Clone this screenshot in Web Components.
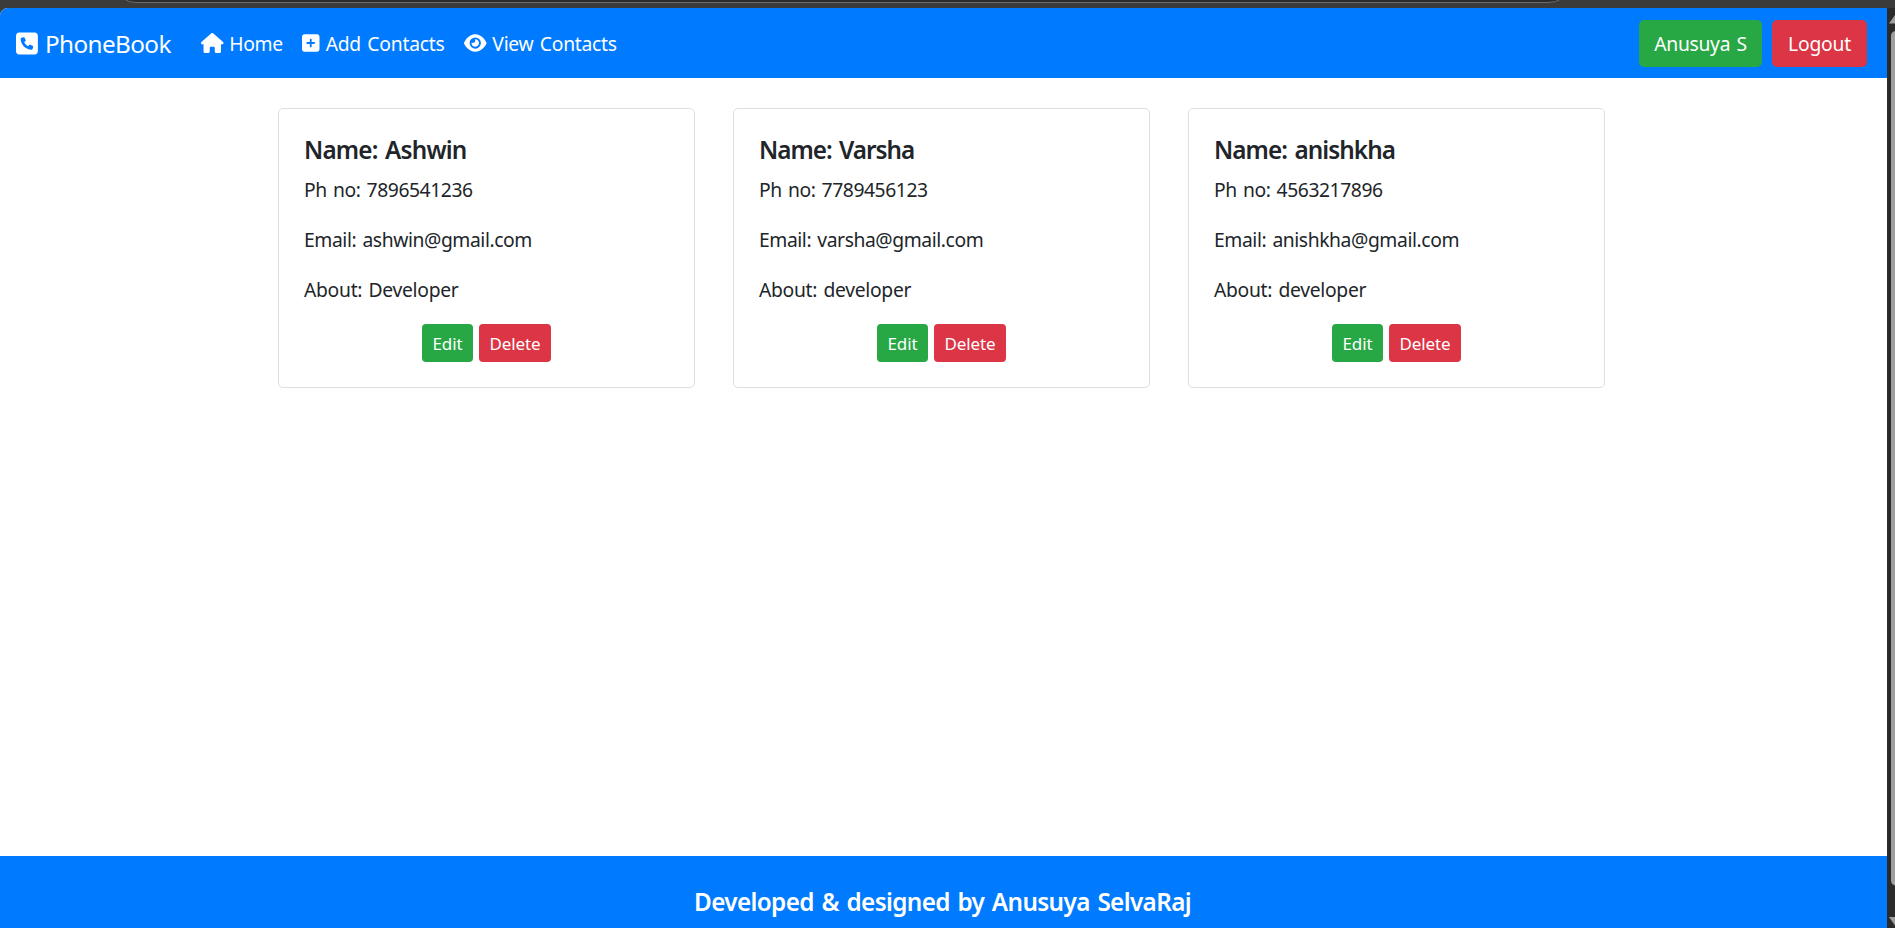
<!DOCTYPE html>
<html lang="en">
<head>
<meta charset="utf-8">
<title>PhoneBook</title>
<style>
html, body { margin: 0; height: 100%; overflow: hidden; }
body { font-family: "Noto Sans", "Open Sans", sans-serif; font-size: 19.3px; line-height: 30px; color: #212529; background: #3b3b3b; }
</style>
</head>
<body>
<app-window></app-window>
<script>
const shadow = (el, html) => { el.attachShadow({ mode: 'open' }).innerHTML = html; return el.shadowRoot; };

// Text run whose tracking is adjusted so that it takes up the given advance width.
class FitText extends HTMLElement {
  connectedCallback() {
    if (this.shadowRoot) return;
    const w = +this.getAttribute('w');
    const root = shadow(this, `<style>:host{display:block;white-space:pre;width:${w}px;padding-top:1px;margin-bottom:-1px}span{display:inline-block;word-spacing:.08em}</style><span></span>`);
    const span = root.querySelector('span');
    span.textContent = this.getAttribute('text');
    const natural = span.getBoundingClientRect().width;
    span.style.letterSpacing = ((w - natural) / span.textContent.length).toFixed(3) + 'px';
  }
}
customElements.define('fit-text', FitText);

const BOX = 'M64 32C28.7 32 0 60.7 0 96V416c0 35.3 28.7 64 64 64H384c35.3 0 64-28.7 64-64V96c0-35.3-28.7-64-64-64H64z';
const ICONS = {
  phone: [448, BOX + 'm90.7 96.7c9.7-2.6 19.9 2.3 23.7 11.6l20 48c3.4 8.2 1 17.6-5.8 23.2L168 231.7c16.6 35.2 45.1 63.7 80.3 80.3l20.2-24.7c5.6-6.8 15-9.2 23.2-5.8l48 20c9.3 3.9 14.2 14 11.6 23.7l-12 44C336.9 378 329 384 320 384C196.3 384 96 283.7 96 160c0-9 6-16.9 14.7-19.3l44-12z'],
  home: [576, 'M575.8 255.5c0 18-15 32.1-32 32.1h-32l.7 160.2c0 2.7-.2 5.4-.5 8.1V472c0 22.1-17.9 40-40 40H456c-1.1 0-2.2 0-3.3-.1c-1.4 .1-2.8 .1-4.2 .1H416 392c-22.1 0-40-17.9-40-40V448 384c0-17.7-14.3-32-32-32H256c-17.7 0-32 14.3-32 32v64 24c0 22.1-17.9 40-40 40H160 128.1c-1.5 0-3-.1-4.5-.2c-1.2 .1-2.4 .2-3.6 .2H104c-22.1 0-40-17.9-40-40V360c0-.9 0-1.9 .1-2.8V287.6H32c-18 0-32-14-32-32.1c0-9 3-17 10-24L266.4 8c7-7 15-8 22-8s15 2 21 7L564.8 231.5c8 7 12 15 11 24z'],
  plus: [448, BOX + 'M200 344V280H136c-13.3 0-24-10.7-24-24s10.7-24 24-24h64V168c0-13.3 10.7-24 24-24s24 10.7 24 24v64h64c13.3 0 24 10.7 24 24s-10.7 24-24 24H248v64c0 13.3-10.7 24-24 24s-24-10.7-24-24z'],
  eye: [576, 'M288 32c-80.8 0-145.5 36.8-192.6 80.6C48.6 156 17.3 208 2.5 243.7c-3.3 7.9-3.3 16.7 0 24.6C17.3 304 48.6 356 95.4 399.4C142.5 443.2 207.2 480 288 480s145.5-36.8 192.6-80.6c46.8-43.5 78.1-95.4 93-131.1c3.3-7.9 3.3-16.7 0-24.6c-14.9-35.7-46.2-87.7-93-131.1C433.5 68.8 368.8 32 288 32zM144 256a144 144 0 1 1 288 0 144 144 0 1 1 -288 0zm144-64c0 35.3-28.7 64-64 64c-7.1 0-13.9-1.2-20.3-3.3c-5.5-1.8-11.9 1.6-11.7 7.4c.3 6.9 1.3 13.8 3.2 20.7c13.7 51.2 66.4 81.6 117.6 67.9s81.6-66.4 67.9-117.6c-11.1-41.5-47.8-69.4-88.6-71.1c-5.8-.2-9.2 6.1-7.4 11.7c2.1 6.4 3.3 13.2 3.3 20.3z']
};
class UiIcon extends HTMLElement {
  connectedCallback() {
    if (this.shadowRoot) return;
    const [w, d] = ICONS[this.getAttribute('name')], h = +this.getAttribute('size');
    shadow(this, `<style>:host{display:block;flex:none}svg{display:block}</style><svg width="${w / 512 * h}" height="${h}" viewBox="0 0 ${w} 512" fill="currentColor" fill-rule="evenodd"><path d="${d}"/></svg>`);
  }
}
customElements.define('ui-icon', UiIcon);

class NavItem extends HTMLElement {
  connectedCallback() {
    if (this.shadowRoot) return;
    const brand = this.hasAttribute('brand');
    shadow(this, `<style>:host{display:flex;align-items:center;gap:${brand ? 7 : 5.7}px;font-size:${brand ? 24.3 : 19.3}px;font-weight:380;height:38px}</style>
      <ui-icon name="${this.getAttribute('icon')}" size="${brand ? 25 : 20}"></ui-icon><fit-text text="${this.getAttribute('label')}" w="${this.getAttribute('w')}"></fit-text>`);
  }
}
customElements.define('nav-item', NavItem);

class UiButton extends HTMLElement {
  connectedCallback() {
    if (this.shadowRoot) return;
    shadow(this, `<style>
      :host{display:flex;box-sizing:border-box;align-items:center;justify-content:center;height:47px;border-radius:5px;color:#fff;background:#28a745;font-weight:380}
      :host([danger]){background:#dc3545}
      :host([small]){height:38px;border-radius:4px;font-size:17px;line-height:26px}
      </style><fit-text text="${this.getAttribute('label')}" w="${this.getAttribute('w')}"></fit-text>`);
  }
}
customElements.define('ui-button', UiButton);

class TopNav extends HTMLElement {
  connectedCallback() {
    if (this.shadowRoot) return;
    shadow(this, `<style>
      :host{display:flex;box-sizing:border-box;height:70px;padding:0 20px 0 16px;align-items:center;color:#fff;background:#007bff}
      nav{display:flex;gap:19.5px;margin:0 auto 0 30.2px}
      .actions{display:flex;gap:10px}
      </style>
      <nav-item brand icon="phone" label="PhoneBook" w="126"></nav-item>
      <nav><nav-item icon="home" label="Home" w="53.7"></nav-item><nav-item icon="plus" label="Add Contacts" w="119"></nav-item><nav-item icon="eye" label="View Contacts" w="124.5"></nav-item></nav>
      <div class="actions"><ui-button label="Anusuya S" w="92.5" style="width:123px"></ui-button><ui-button danger label="Logout" w="63" style="width:95px"></ui-button></div>`);
  }
}
customElements.define('top-nav', TopNav);

class ContactCard extends HTMLElement {
  connectedCallback() {
    if (this.shadowRoot) return;
    const a = n => this.getAttribute(n), w = a('widths').split(' ');
    shadow(this, `<style>
      :host{display:block;box-sizing:border-box;width:417px;height:280px;padding:25px;border:1px solid #dfdfdf;border-radius:5px;background:#fff}
      h5{margin:0 0 10px;font-size:24.3px;font-weight:570;line-height:30px}
      p{margin:0 0 20px;font-weight:380}
      div{display:flex;justify-content:center;gap:6px}
      </style>
      <h5><fit-text text="Name: ${a('name')}" w="${w[0]}"></fit-text></h5>
      <p><fit-text text="Ph no: ${a('phone')}" w="${w[1]}"></fit-text></p>
      <p><fit-text text="Email: ${a('email')}" w="${w[2]}"></fit-text></p>
      <p><fit-text text="About: ${a('about')}" w="${w[3]}"></fit-text></p>
      <div><ui-button small label="Edit" w="30" style="width:51px"></ui-button><ui-button small danger label="Delete" w="51" style="width:72px"></ui-button></div>`);
  }
}
customElements.define('contact-card', ContactCard);

class PageFooter extends HTMLElement {
  connectedCallback() {
    if (this.shadowRoot) return;
    shadow(this, `<style>
      :host{display:flex;box-sizing:border-box;height:72px;padding:30px 2px 0 0;justify-content:center;color:#fff;background:#007bff;font-size:24.3px;font-weight:570}
      </style><fit-text text="Developed &amp; designed by Anusuya SelvaRaj" w="497"></fit-text>`);
  }
}
customElements.define('page-footer', PageFooter);

class ScrollRail extends HTMLElement {
  connectedCallback() {
    if (this.shadowRoot) return;
    shadow(this, `<style>
      :host{display:block;width:8px;overflow:hidden;background:#2b2b2b}
      svg{display:block}
      </style><svg width="8" height="920" viewBox="0 0 8 920" fill="#9f9f9f"><path d="M2 15.500L8 7v8.500zM8 23v854.500q-4-1-4-5V28q0-4 4-5zM2 909h6v8.500z"/></svg>`);
  }
}
customElements.define('scroll-rail', ScrollRail);

class AppWindow extends HTMLElement {
  connectedCallback() {
    shadow(this, `<style>
      :host{display:grid;grid-template:8px 920px / 1887px 8px;width:1895px;height:928px}
      .chrome{grid-column:1/3;overflow:hidden}
      .chrome svg{display:block}
      .page{display:flex;flex-direction:column;background:#fff;border-radius:8px 0 0 0;overflow:hidden}
      main{display:flex;flex:1;align-items:flex-start;gap:38px;padding:30px 0 0 278px}
      </style>
      <div class="chrome"><svg width="1895" height="8"><path d="M124 -1Q129 2.500 136 2.500H1548Q1556 2.500 1561 -1" fill="#2b2b2b" stroke="#6c6c6c"/></svg></div>
      <div class="page">
        <top-nav></top-nav>
        <main>
          <contact-card name="Ashwin" phone="7896541236" email="ashwin@gmail.com" about="Developer" widths="162.5 168.7 228 154.5"></contact-card>
          <contact-card name="Varsha" phone="7789456123" email="varsha@gmail.com" about="developer" widths="155.300 168.7 224.3 152.2"></contact-card>
          <contact-card name="anishkha" phone="4563217896" email="anishkha@gmail.com" about="developer" widths="181 168.7 245 152.2"></contact-card>
        </main>
        <page-footer></page-footer>
      </div>
      <scroll-rail></scroll-rail>`);
  }
}
customElements.define('app-window', AppWindow);
</script>
</body>
</html>
